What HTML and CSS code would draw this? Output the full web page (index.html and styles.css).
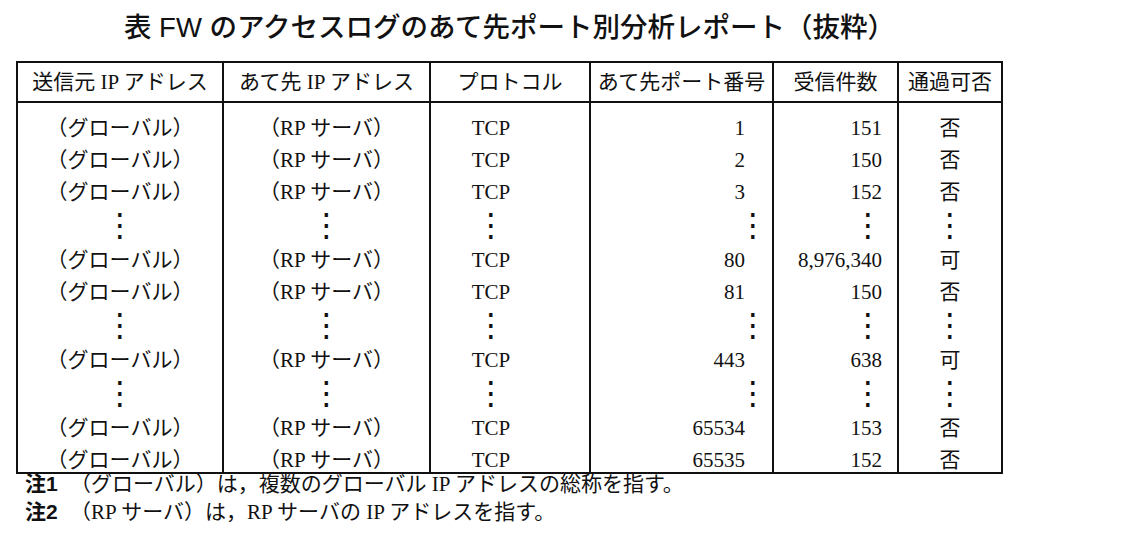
FILE: index.html
```html
<!DOCTYPE html>
<html lang="ja">
<head>
<meta charset="utf-8">
<title>FW アクセスログ</title>
<link rel="stylesheet" href="styles.css">
</head>
<body>
<div class="page">
  <h1 class="title">表 FW のアクセスログのあて先ポート別分析レポート（抜粋）</h1>
  <table class="log">
    <colgroup>
      <col class="c1"><col class="c2"><col class="c3"><col class="c4"><col class="c5"><col class="c6">
    </colgroup>
    <thead>
      <tr><th>送信元 IP アドレス</th><th>あて先 IP アドレス</th><th>プロトコル</th><th>あて先ポート番号</th><th>受信件数</th><th>通過可否</th></tr>
    </thead>
    <tbody>
      <tr class="first"><td>（グローバル）</td><td>（RP サーバ）</td><td class="proto">TCP</td><td class="port">1</td><td class="count">151</td><td>否</td></tr>
      <tr><td>（グローバル）</td><td>（RP サーバ）</td><td class="proto">TCP</td><td class="port">2</td><td class="count">150</td><td>否</td></tr>
      <tr><td>（グローバル）</td><td>（RP サーバ）</td><td class="proto">TCP</td><td class="port">3</td><td class="count">152</td><td>否</td></tr>
      <tr class="dots"><td><span class="vd">⋮</span></td><td><span class="vd">⋮</span></td><td class="proto"><span class="vd">⋮</span></td><td class="port"><span class="vd vd-port">⋮</span></td><td class="count"><span class="vd vd-count">⋮</span></td><td><span class="vd">⋮</span></td></tr>
      <tr><td>（グローバル）</td><td>（RP サーバ）</td><td class="proto">TCP</td><td class="port">80</td><td class="count">8,976,340</td><td>可</td></tr>
      <tr><td>（グローバル）</td><td>（RP サーバ）</td><td class="proto">TCP</td><td class="port">81</td><td class="count">150</td><td>否</td></tr>
      <tr class="dots"><td><span class="vd">⋮</span></td><td><span class="vd">⋮</span></td><td class="proto"><span class="vd">⋮</span></td><td class="port"><span class="vd vd-port">⋮</span></td><td class="count"><span class="vd vd-count">⋮</span></td><td><span class="vd">⋮</span></td></tr>
      <tr><td>（グローバル）</td><td>（RP サーバ）</td><td class="proto">TCP</td><td class="port">443</td><td class="count">638</td><td>可</td></tr>
      <tr class="dots"><td><span class="vd">⋮</span></td><td><span class="vd">⋮</span></td><td class="proto"><span class="vd">⋮</span></td><td class="port"><span class="vd vd-port">⋮</span></td><td class="count"><span class="vd vd-count">⋮</span></td><td><span class="vd">⋮</span></td></tr>
      <tr><td>（グローバル）</td><td>（RP サーバ）</td><td class="proto">TCP</td><td class="port">65534</td><td class="count">153</td><td>否</td></tr>
      <tr class="last"><td>（グローバル）</td><td>（RP サーバ）</td><td class="proto">TCP</td><td class="port">65535</td><td class="count">152</td><td>否</td></tr>
    </tbody>
  </table>
  <div class="notes">
    <p class="note"><span class="note-label">注1</span><span class="note-text">（グローバル）は，複数のグローバル IP アドレスの総称を指す。</span></p>
    <p class="note"><span class="note-label">注2</span><span class="note-text">（RP サーバ）は，RP サーバの IP アドレスを指す。</span></p>
  </div>
</div>
</body>
</html>
```
FILE: styles.css
```css
html, body {
  margin: 0;
  background: #fff;
}

body {
  color: #111;
  font-family: "Liberation Serif", "Noto Sans CJK JP", serif;
}

.page {
  padding-left: 16px;
}

.title {
  width: 987px;
  margin: 0 0 15px;
  padding-top: 10px;
  text-align: center;
  font-family: "Liberation Sans", "Noto Sans CJK JP", sans-serif;
  font-size: 27.5px;
  line-height: 36px;
  font-weight: 500;
}

.log {
  width: 987px;
  border-collapse: collapse;
  table-layout: fixed;
  border: 2px solid #111;
  font-size: 21px;
}

.c1 { width: 206px; }
.c2 { width: 207px; }
.c3 { width: 160px; }
.c4 { width: 183px; }
.c5 { width: 125px; }
.c6 { width: 104px; }

.log th {
  padding: 0;
  border: 2px solid #111;
  font-weight: 400;
  line-height: 38px;
  white-space: nowrap;
}

.log td {
  padding: 0;
  border-left: 2px solid #111;
  border-right: 2px solid #111;
  text-align: center;
  line-height: 32px;
  white-space: nowrap;
}

.log .first td {
  padding-top: 9px;
}

.log .dots td {
  line-height: 30px;
  padding-bottom: 6px;
}

.log .last td {
  line-height: 24px;
  padding-top: 4px;
}

.log td.proto {
  padding-right: 38px;
}

.log td.port {
  text-align: right;
  padding-right: 27px;
}

.log td.count {
  text-align: right;
  padding-right: 15px;
}

.vd {
  display: inline-block;
  font-family: "DejaVu Sans", sans-serif;
  font-size: 32px;
  line-height: 20px;
  vertical-align: middle;
  text-align: center;
}

.vd-port {
  width: 8px;
}

.vd-count {
  width: 30px;
}

.notes {
  margin-left: 9px;
  display: flex;
  flex-direction: column;
  gap: 8px;
}

.note {
  margin: 0;
  display: flex;
  font-size: 21px;
  line-height: 20px;
  white-space: nowrap;
}

.note-label {
  width: 45px;
  flex: none;
  font-family: "Liberation Sans", "Noto Sans CJK JP", sans-serif;
  font-weight: 700;
}
```
